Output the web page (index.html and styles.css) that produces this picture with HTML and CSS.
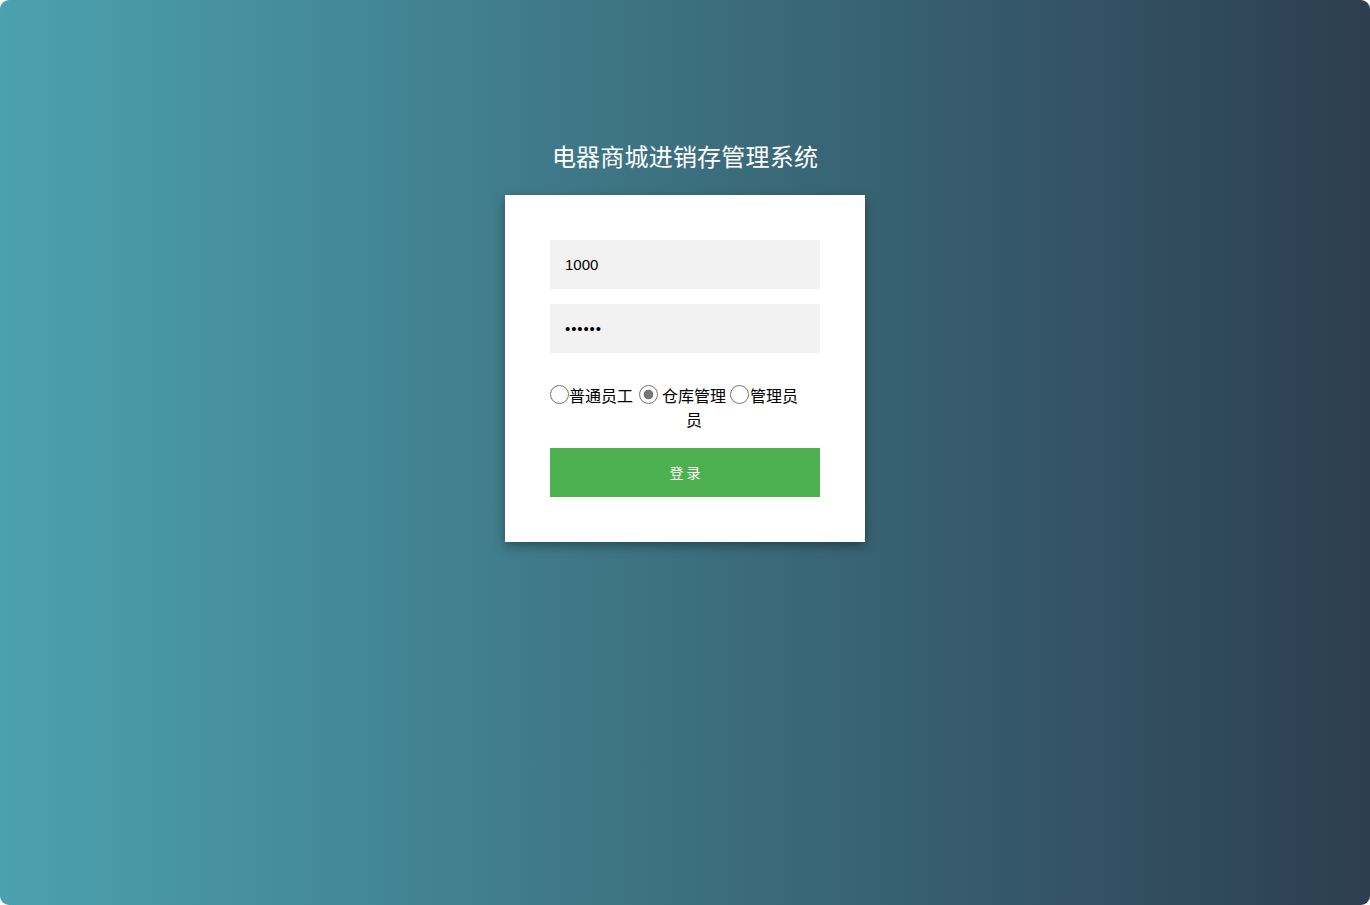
FILE: index.html
```html
<!DOCTYPE html>
<html lang="zh-CN">
<head>
<meta charset="utf-8">
<title>电器商城进销存管理系统</title>
<link rel="stylesheet" href="styles.css">
</head>
<body>
<div class="page">
  <h1 class="title">电器商城进销存管理系统</h1>
  <form class="card">
    <input class="field" type="text" value="1000">
    <input class="field pass" type="password" value="123456">
    <div class="roles">
      <input class="radio" type="radio" name="role" id="r1">
      <label class="role" for="r1">普通员工</label>
      <input class="radio gap-l" type="radio" name="role" id="r2" checked>
      <label class="role wrap" for="r2">仓库管理员</label>
      <input class="radio gap-s" type="radio" name="role" id="r3">
      <label class="role" for="r3">管理员</label>
    </div>
    <button class="btn" type="button">登 录</button>
  </form>
</div>
</body>
</html>
```
FILE: styles.css
```css
html {
  background: #ffffff;
  margin: 0;
  height: 100%;
}
body {
  margin: 0;
  height: 100%;
  font-family: "Liberation Sans", "Noto Sans CJK SC", sans-serif;
}
.page {
  box-sizing: border-box;
  height: 905px;
  border-radius: 9px;
  background: linear-gradient(to right, #4ca1af, #2c3e50);
  display: flex;
  flex-direction: column;
  align-items: center;
  padding-top: 140px;
}
.title {
  margin: 0 0 23px;
  font-size: 24px;
  line-height: 32px;
  font-weight: normal;
  color: #ffffff;
  font-family: "Noto Sans CJK SC", sans-serif;
  letter-spacing: 0.2px;
}
.card {
  box-sizing: border-box;
  width: 360px;
  background: #ffffff;
  padding: 45px;
  display: flex;
  flex-direction: column;
  box-shadow: 0 4px 10px rgba(0, 0, 0, 0.35);
}
.field {
  box-sizing: border-box;
  width: 270px;
  height: 49px;
  border: 0;
  outline: 0;
  background: #f2f2f2;
  padding: 0 15px;
  font-family: "Liberation Sans", sans-serif;
  font-size: 15px;
  color: #000;
  margin: 0 0 15px;
}
.pass {
  letter-spacing: 0.9px;
}
.roles {
  display: flex;
  align-items: flex-start;
  margin-top: 15px;
  margin-bottom: 17px;
  font-family: "Noto Sans CJK SC", sans-serif;
  font-size: 16px;
  line-height: 24px;
  color: #000;
}
.radio {
  -webkit-appearance: none;
  appearance: none;
  box-sizing: border-box;
  width: 19px;
  height: 19px;
  margin: 2px 0 0 0;
  border: 1px solid #767676;
  border-radius: 50%;
  background: #fff;
  flex: none;
}
.radio:checked {
  border-color: #767676;
  background: radial-gradient(circle, #777 0 4.5px, #fff 5.2px 100%);
}
.gap-l { margin-left: 6px; margin-right: 4px; }
.gap-s { margin-left: 4px; margin-right: 1px; }
.role {
  flex: none;
  letter-spacing: 0;
}
.wrap {
  width: 64px;
  text-align: center;
}
.btn {
  width: 270px;
  height: 49px;
  border: 0;
  background: #4caf50;
  color: #ffffff;
  font-family: "Noto Sans CJK SC", sans-serif;
  font-size: 14px;
  line-height: 20px;
  padding: 0 0 2px;
  cursor: pointer;
}
```
